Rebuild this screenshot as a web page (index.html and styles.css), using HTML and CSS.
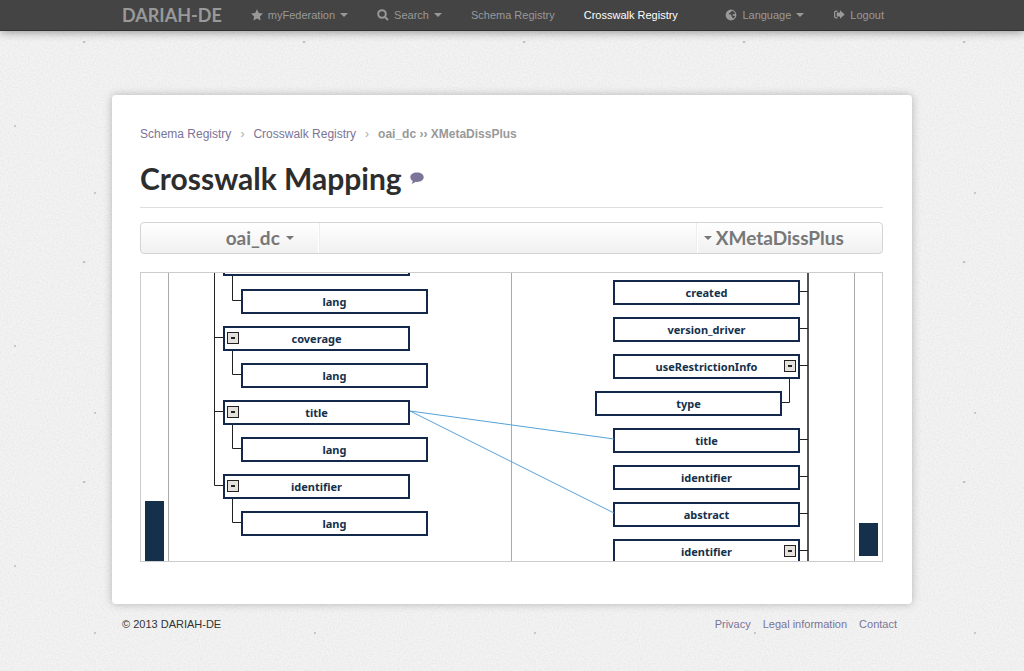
FILE: index.html
```html
<!DOCTYPE html>
<html lang="en">
<head>
<meta charset="utf-8">
<title>Crosswalk Mapping - DARIAH-DE</title>
<link rel="stylesheet" href="styles.css">
</head>
<body>
<header class="navbar">
  <nav class="container nav-inner">
    <a class="brand" href="#">DARIAH-DE</a>
    <button class="nav-item" type="button">
      <svg class="icon" viewBox="0 0 12 12"><path d="M6 .2l1.800 3.700 4.100.6-3 2.900.7 4.100L6 9.500l-3.600 2 .7-4.100-3-2.900 4.100-.6z"/></svg>
      myFederation<span class="caret"></span></button>
    <button class="nav-item" type="button">
      <svg class="icon" viewBox="0 0 12 12"><circle class="stroke" cx="5" cy="5" r="3.800"/><path class="stroke" d="M8 8l3 3"/></svg>
      Search<span class="caret"></span></button>
    <a class="nav-item" href="#">Schema Registry</a>
    <a class="nav-item active" href="#">Crosswalk Registry</a>
    <button class="nav-item nav-end" type="button">
      <svg class="icon" viewBox="0 0 12 12"><path fill-rule="evenodd" d="M6 .6a5.400 5.400 0 1 0 0 10.800A5.400 5.400 0 0 0 6 .6zM7 1.800l1.900.9 1.200 1.500-.5 1.100-1.300-.4-1.100 1 1.200.8 1.600.2-.6 1.700-1.500 1-.6-1.500-1-.9.100-1.300-1-.6-1.500.2.300-1.500 1.300-.4z"/></svg>
      Language<span class="caret"></span></button>
    <a class="nav-item" href="#">
      <svg class="icon" viewBox="0 0 12 12"><path d="M4.500 1.500H3A2 2 0 0 0 1 3.500v4a2 2 0 0 0 2 2h1.500V8.300H3.200a1 1 0 0 1-1-1V3.700a1 1 0 0 1 1-1h1.300zM7 1.200l4.700 4.300L7 9.800V7.400H3.700V3.600H7z"/></svg>
      Logout</a>
  </nav>
</header>

<main class="container card">
  <nav class="breadcrumb" aria-label="Breadcrumb">
    <a href="#">Schema Registry</a><span class="sep">›</span>
    <a href="#">Crosswalk Registry</a><span class="sep">›</span>
    <strong>oai_dc ›› XMetaDissPlus</strong>
  </nav>
  <div class="page-title">
    <h1>Crosswalk Mapping</h1>
    <button class="comment" type="button" aria-label="Comments">
      <svg viewBox="0 0 14 12"><path d="M7 .5c3.800 0 6.700 2 6.700 4.700S10.800 9.900 7 9.900l-1.300-.1C4.600 10.900 3.200 11.600 1.500 11.800c.8-.8 1.200-1.700 1.200-2.900C1.200 8 .3 6.700.3 5.200.3 2.500 3.200.5 7 .5z"/></svg>
    </button>
  </div>

  <div class="toolbar">
    <button class="schema source" type="button">oai_dc<span class="caret"></span></button>
    <button class="schema target" type="button"><span class="caret"></span>XMetaDissPlus</button>
  </div>

  <section class="mapping" aria-label="Schema mapping">
    <div class="track"><div class="thumb thumb-source"></div></div>
    <div class="pane pane-source">
      <svg class="wires wires-source" width="80" height="288"><path d="M45.500 0V212.500M45.500 64.500H55M45.500 138.500H55M45.500 212.500H55M63.500 3V27.500H74M63.500 76V101.500H74M63.500 150V175.500H74M63.500 224V249.500H74"/></svg>
      <div class="node row-0"></div>
      <div class="node child row-1">lang</div>
      <div class="node row-2"><button class="toggle" type="button" aria-label="Collapse coverage"></button>coverage</div>
      <div class="node child row-3">lang</div>
      <div class="node row-4"><button class="toggle" type="button" aria-label="Collapse title"></button>title</div>
      <div class="node child row-5">lang</div>
      <div class="node row-6"><button class="toggle" type="button" aria-label="Collapse identifier"></button>identifier</div>
      <div class="node child row-7">lang</div>
    </div>
    <div class="pane pane-target">
      <svg class="wires wires-target" width="80" height="288"><path class="trunk" d="M34 0V288"/><path d="M25 18.500H34M25 55.500H34M25 92.500H34M25 166.500H34M25 203.500H34M25 240.500H34M25 277.500H34M15.500 105V129.500H6"/></svg>
      <div class="node row-1">created</div>
      <div class="node row-2">version_driver</div>
      <div class="node row-3">useRestrictionInfo<button class="toggle" type="button" aria-label="Collapse useRestrictionInfo"></button></div>
      <div class="node child row-4">type</div>
      <div class="node row-5">title</div>
      <div class="node row-6">identifier</div>
      <div class="node row-7">abstract</div>
      <div class="node row-8">identifier<button class="toggle" type="button" aria-label="Collapse identifier"></button></div>
    </div>
    <div class="track"><div class="thumb thumb-target"></div></div>
    <svg class="links" viewBox="0 0 204 104" preserveAspectRatio="none"><path d="M0 1L204 29M0 1L204 103"/></svg>
  </section>
</main>

<footer class="container footer">
  <span>© 2013 DARIAH-DE</span>
  <nav class="footer-links"><a href="#">Privacy</a><a href="#">Legal information</a><a href="#">Contact</a></nav>
</footer>
</body>
</html>
```

FILE: styles.css
```css
* { box-sizing: border-box; }

body {
  margin: 0;
  min-height: 100vh;
  font: 11px/20px "Liberation Sans", Arial, sans-serif;
  color: #333;
  background: #f3f3f3 url("data:image/svg+xml,%3Csvg xmlns='http://www.w3.org/2000/svg' width='220' height='220'%3E%3Cfilter id='n'%3E%3CfeTurbulence type='fractalNoise' baseFrequency='0.6' numOctaves='3' stitchTiles='stitch'/%3E%3CfeColorMatrix values='0 0 0 0 0.4 0 0 0 0 0.4 0 0 0 0 0.4 0.25 0 0 0 -0.08'/%3E%3C/filter%3E%3Crect width='220' height='220' filter='url(%23n)'/%3E%3Cg fill='%23bbb'%3E%3Cellipse cx='84' cy='42' rx='1.500' ry='1'/%3E%3Ccircle cx='15' cy='126' r='1'/%3E%3Ccircle cx='95' cy='193' r='1'/%3E%3C/g%3E%3C/svg%3E");
}

button { margin: 0; padding: 0; border: 0; background: none; font: inherit; color: inherit; cursor: pointer; }
a { color: #7b7498; text-decoration: none; }

.container { width: min(800px, 100% - 32px); margin: 0 auto; }

/* Navigation bar */
.navbar {
  background: #444;
  border-bottom: 1px solid #333;
  box-shadow: 0 1px 10px rgba(0, 0, 0, .4);
}
.nav-inner { display: flex; align-items: center; gap: 29px; height: 30px; padding: 0 28px 0 10px; white-space: nowrap; }
.brand { font: 700 18px/30px Lato, sans-serif; color: #999; }
.nav-item { display: flex; align-items: center; gap: 5px; color: #999; }
.nav-item.active { color: #fff; }
.nav-end { margin-left: auto; }
.icon { width: 12px; height: 12px; fill: currentColor; }
.stroke { fill: none; stroke: currentColor; stroke-width: 2; }
.caret { border: 4px solid transparent; border-top-color: currentColor; border-bottom: 0; }

/* Content card */
.card {
  margin-top: 64px;
  padding: 29px 29px 42px 28px;
  background: #fff;
  border-radius: 4px;
  box-shadow: 0 0 8px rgba(0, 0, 0, .25);
}
.breadcrumb { display: flex; font-size: 12px; color: #999; }
.sep { margin: 0 9px; color: #aaa; }
.page-title {
  display: flex;
  align-items: center;
  gap: 8px;
  margin-top: 14px;
  padding-bottom: 9px;
  border-bottom: 1px solid #ddd;
}
h1 { margin: 0; font: 700 30px/40px Lato, sans-serif; color: #2d2d2d; }
.comment svg { display: block; width: 14px; height: 12px; fill: #7b7498; }

.toolbar {
  display: flex;
  justify-content: space-between;
  height: 32px;
  margin-top: 14px;
  border: 1px solid #d4d4d4;
  border-radius: 4px;
  background: linear-gradient(#fff, #f0f0f0);
}
.schema { display: flex; align-items: center; font: 700 19px/30px Lato, sans-serif; color: #777; }
.source { width: 24%; justify-content: flex-end; gap: 6px; padding-right: 24px; border-right: 1px solid #fff; box-shadow: 1px 0 #eee; }
.target { width: 25%; gap: 4px; padding-left: 6px; border-left: 1px solid #fff; box-shadow: -1px 0 #eee; }

/* Mapping canvas */
.mapping {
  position: relative;
  display: flex;
  height: 290px;
  margin-top: 18px;
  border: 1px solid #ccc;
  overflow: hidden;
}
.track { position: relative; flex: 0 0 27px; }
.thumb { position: absolute; left: 4px; width: 19px; background: #14304b; }
.thumb-source { top: 228px; height: 61px; }
.thumb-target { top: 250px; height: 33px; }
.pane { position: relative; flex: 1; border-left: 1px solid #aaa; }
.pane-target { border-right: 1px solid #aaa; }

.node {
  position: absolute;
  width: 187px;
  height: 25px;
  border: 2px solid #14284b;
  background: #fff;
  font: 700 11px/22px "Noto Sans", sans-serif;
  color: #14304b;
  text-align: center;
}
.pane-source .node { left: 54px; }
.pane-source .child { left: 72px; }
.pane-target .node { right: 54px; }
.pane-target .child { right: 72px; }

.pane-source .row-0 { top: -22px; }
.pane-source .row-1 { top: 16px; }
.pane-source .row-2 { top: 53px; }
.pane-source .row-3 { top: 90px; }
.pane-source .row-4 { top: 127px; }
.pane-source .row-5 { top: 164px; }
.pane-source .row-6 { top: 201px; }
.pane-source .row-7 { top: 238px; }
.pane-target .row-1 { top: 7px; }
.pane-target .row-2 { top: 44px; }
.pane-target .row-3 { top: 81px; }
.pane-target .row-4 { top: 118px; }
.pane-target .row-5 { top: 155px; }
.pane-target .row-6 { top: 192px; }
.pane-target .row-7 { top: 229px; }
.pane-target .row-8 { top: 266px; }

.toggle {
  position: absolute;
  top: 4px;
  width: 12px;
  height: 12px;
  border: 1px solid #222;
  background: linear-gradient(#222, #222) center / 4px 2px no-repeat #e4e1dc;
}
.pane-source .toggle { left: 2px; }
.pane-target .toggle { right: 2px; }

.wires { position: absolute; top: 0; fill: none; stroke: #222; }
.wires-source { left: 0; }
.wires-target { right: 0; }
.trunk { stroke: #555; stroke-width: 2; }
.links {
  position: absolute;
  top: 137px;
  left: 269px;
  width: calc(100% - 537px);
  height: 104px;
  fill: none;
  stroke: #55a2d8;
}

/* Footer */
.footer { display: flex; justify-content: space-between; padding: 10px 15px 26px 10px; }
.footer-links { display: flex; gap: 12px; }
```
